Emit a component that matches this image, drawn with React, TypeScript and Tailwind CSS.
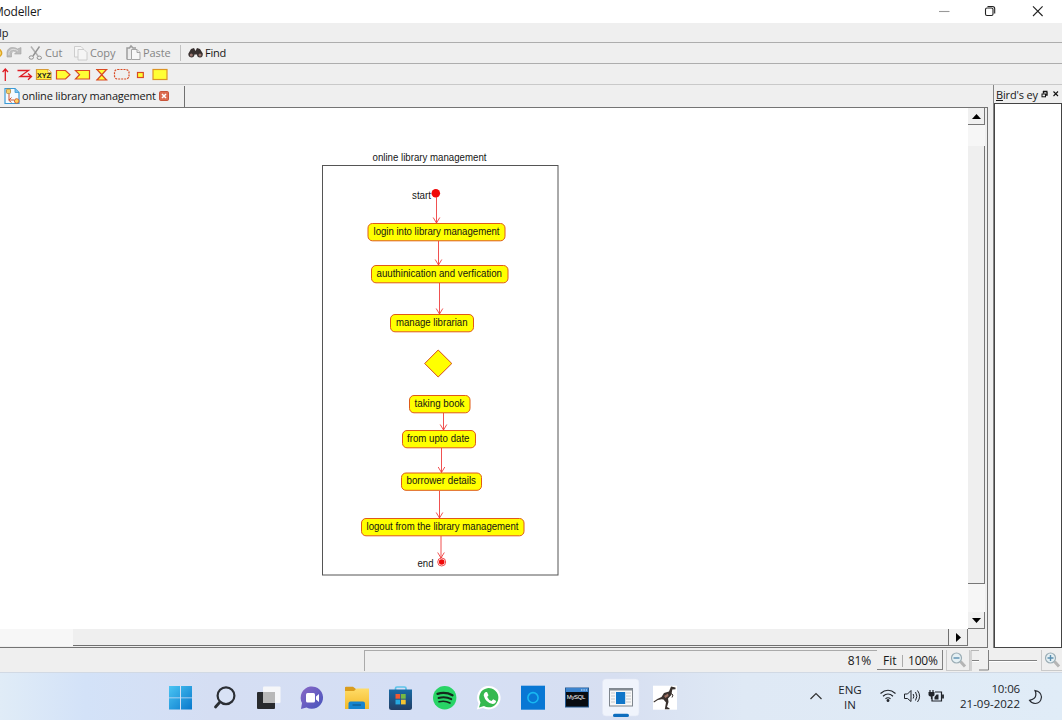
import React from "react";

type NodeBox = { label: string; x: number; y: number; w: number; tx: number; tw: number };

const nodes: NodeBox[] = [
  { label: "login into library management", x: 368, y: 223.5, w: 137, tx: 373.5, tw: 126 },
  { label: "auuthinication and verfication", x: 371.5, y: 265.5, w: 136.5, tx: 376.5, tw: 125.5 },
  { label: "manage librarian", x: 390.5, y: 314.5, w: 83, tx: 396, tw: 71.5 },
  { label: "taking book", x: 409.5, y: 395.5, w: 60.5, tx: 414.5, tw: 50 },
  { label: "from upto date", x: 402.5, y: 430.5, w: 73, tx: 407, tw: 62.5 },
  { label: "borrower details", x: 401.5, y: 473, w: 80, tx: 406.5, tw: 69.5 },
  { label: "logout from the library management", x: 361.5, y: 518.5, w: 162.5, tx: 366.5, tw: 152 },
];

const arrows = [
  [436.5, 197, 223],
  [438.5, 241, 265],
  [439.5, 283, 314],
  [443.5, 413, 430],
  [441.5, 448, 472.5],
  [439.5, 491, 518],
  [441, 536, 558],
];

function Diagram() {
  return (
    <svg className="block h-[521px] w-[968px] bg-white" viewBox="0 108 968 521" fontFamily="'Liberation Sans', Arial, sans-serif" fontSize="10.4" fill="#151515">
      <text x="372.5" y="161" textLength="114" lengthAdjust="spacingAndGlyphs">online library management</text>
      <rect x="322.5" y="165.5" width="235.5" height="409.5" fill="none" stroke="#555" />
      <text x="412" y="199" textLength="19" lengthAdjust="spacingAndGlyphs">start</text>
      <circle cx="435.8" cy="193.3" r="4.3" fill="#f00909" />
      {arrows.map(([x, a, b]) => (
        <g key={a} fill="none" stroke="#ee3d3d" strokeWidth="0.9">
          <path d={`M${x} ${a}V${b}`} />
          <path d={`M${x - 3.3} ${b - 5.5}L${x} ${b}L${x + 3.3} ${b - 5.5}`} />
        </g>
      ))}
      {nodes.map((n) => (
        <g key={n.label}>
          <rect x={n.x} y={n.y} width={n.w} height="17.3" rx="4.5" fill="#ffff00" stroke="#df5a18" />
          <text x={n.tx} y={Math.floor(n.y + 11.9)} textLength={n.tw} lengthAdjust="spacingAndGlyphs">{n.label}</text>
        </g>
      ))}
      <path d="M438.2 350L451.8 363.5L438.2 377L424.7 363.5Z" fill="#ffff00" stroke="#d34a1c" />
      <text x="417.5" y="567" textLength="16" lengthAdjust="spacingAndGlyphs">end</text>
      <circle cx="441.7" cy="562" r="4" fill="#fff" stroke="#f02020" strokeWidth="0.8" />
      <circle cx="441.7" cy="562" r="2.8" fill="#f00909" />
    </svg>
  );
}

function TitleBar() {
  return (
    <div className="flex h-[23px] shrink-0 items-center justify-between bg-white">
      <span className="ml-[-7px] text-[12px] tracking-[-0.2px]">Modeller</span>
      <svg className="h-[23px] w-[182px]" viewBox="880 0 182 23" fill="none" stroke="#222" strokeWidth="1.1">
        <path d="M939 11.5H949.5" stroke="#999" />
        <rect x="985.5" y="8" width="7.5" height="7.5" rx="1.5" />
        <path d="M987.5 6.5H992.5Q994.7 6.5 994.7 8.7V13.5" />
        <path d="M1033 6.3L1042.6 16M1042.6 6.3L1033 16" />
      </svg>
    </div>
  );
}

function EditBar() {
  return (
    <div className="flex h-[21px] shrink-0 items-center border-b border-[#adadad] text-[11px] text-[#858585]">
      <svg className="h-5 w-[45px] shrink-0" viewBox="0 43 45 20">
        <circle cx="-2" cy="53" r="3.6" fill="#ffe37a" stroke="#dda524" strokeWidth="1.6" />
        <path d="M7 57V52Q8 47.5 12.5 47.5Q16 47.5 17.5 49L21 47.5V54H14.5L16.5 52Q13 49.8 11.5 53V57Z" fill="#bcbcbc" stroke="#a3a3a3" strokeWidth="0.6" />
        <path d="M9 55Q8 50 13 49.3Q16 49 18 51" fill="none" stroke="#dedede" />
        <g fill="none" stroke="#929292">
          <path d="M31 46.5L38 56" stroke="#b0b0b0" strokeWidth="1.5" />
          <path d="M39.5 46.5L33 56" strokeWidth="1.4" />
          <ellipse cx="31.3" cy="57.5" rx="2.2" ry="1.7" />
          <ellipse cx="39.3" cy="57.8" rx="2.2" ry="1.7" />
        </g>
      </svg>
      <span className="w-[28px] tracking-[-0.1px]">Cut</span>
      <svg className="h-5 w-[17px] shrink-0" viewBox="73 43 17 20" fill="#f5f5f5" stroke="#c8c8c8" strokeWidth="0.9">
        <path d="M74.5 46.5H81L83.5 49V57H74.5Z" />
        <path d="M78 49.5H84L87 52.5V60H78Z" />
      </svg>
      <span className="w-[35px] tracking-[-0.1px]">Copy</span>
      <svg className="h-5 w-[18px] shrink-0" viewBox="125 43 18 20" fill="#ececec" stroke="#9d9d9d" strokeWidth="0.9">
        <path d="M127 59.5V48H129.5L131 46L133 48H136" strokeWidth="1.5" />
        <path d="M127 59.5H131" />
        <path d="M131.5 49.5H137L140 52.5V59.5H131.5Z" fill="#f8f8f8" />
        <path d="M137 49.5V52.5H140" />
      </svg>
      <span className="w-[36px] tracking-[-0.1px]">Paste</span>
      <span className="ml-px mr-[7px] h-[16px] w-px bg-[#c2c2c2]" />
      <svg className="h-5 w-[17px] shrink-0" viewBox="188 43 17 20">
        <path d="M191 49L194 48L195.5 51L197 48L200 49L202.8 53.5Q203 57.3 200 57.5Q197 57.3 197 54.5H194.5Q194.3 57.5 191.3 57.5Q188.3 57.2 188.3 53.8Z" fill="#38302f" />
        <circle cx="191.3" cy="55" r="1.5" fill="#9b7770" />
        <circle cx="200" cy="55" r="1.5" fill="#9b7770" />
      </svg>
      <span className="tracking-[-0.2px] text-[#151515]">Find</span>
    </div>
  );
}

function ShapeBar() {
  return (
    <div className="flex h-[21px] shrink-0 items-center border-b border-[#c9c9c9]">
      <svg className="h-5 w-[180px]" viewBox="0 64 180 20" fill="#ffff35" stroke="#d94a23" strokeWidth="1.2">
        <path d="M5.3 81V69M2.6 72L5.3 69L8 72" fill="none" stroke="#df1c24" strokeWidth="1.3" />
        <path d="M17.5 70.5H28.5L20 76.5H31M28 73.5L31.5 76.5L28 79.8" fill="none" stroke="#df1c24" strokeWidth="1.3" />
        <path d="M36.5 69.5H48L51 72.5V79.5H36.5Z" stroke="#d79b36" fill="#ffee3b" />
        <path d="M48 69.5V72.5H51" fill="#fff" stroke="#d79b36" strokeWidth="0.7" />
        <text x="37" y="77.5" fontFamily="'Liberation Sans', sans-serif" fontSize="6.8" fontWeight="bold" fill="#222" stroke="none" textLength="14" lengthAdjust="spacingAndGlyphs">XYZ</text>
        <path d="M56.5 70.5H65.5L70 74.7L65.5 79H56.5Z" />
        <path d="M75.5 70.5H89.5V79H75.5L79.5 74.7Z" />
        <path d="M96 69.5H107.5M96 80H107.5M97 69.5L106.5 80H97L106.5 69.5Z" />
        <rect x="114.5" y="69.5" width="14.5" height="9.5" rx="3" fill="none" strokeDasharray="2 1" />
        <rect x="137.5" y="72.5" width="5.8" height="5" />
        <rect x="153" y="69.5" width="14" height="10" stroke="#dd9424" />
      </svg>
    </div>
  );
}

function TabStrip() {
  return (
    <div className="flex h-[22px] shrink-0 items-center bg-[#efefef]">
      <div className="flex h-[21px] w-[185px] items-center border-r-[1.5px] border-[#707070] pl-[4px]">
        <svg className="h-[18px] w-[18px] shrink-0" viewBox="4 86 18 18">
          <path d="M5 87.5H15L19 91.5V102.5H5Z" fill="#f4fbff" stroke="#3c9bd6" strokeWidth="1.2" />
          <path d="M15 87.5V91.5H19" fill="#78c2ee" stroke="#3c9bd6" strokeWidth="0.8" />
          <rect x="6.5" y="88" width="4" height="4.5" rx="1" fill="#f4d06b" stroke="#a3782c" strokeWidth="0.7" />
          <path d="M9 93V99H14M11.5 96.5L8.8 99.3L11.5 101.5" fill="none" stroke="#cf5433" strokeWidth="1" />
          <circle cx="16.7" cy="100" r="2.3" fill="#ffd45a" stroke="#d05830" strokeWidth="0.9" />
        </svg>
        <span className="w-[137px] whitespace-nowrap text-[11px] tracking-[-0.2px]">online library management</span>
        <svg className="h-[10px] w-[10px] shrink-0" viewBox="0 0 10 10">
          <rect x="0.5" y="0.5" width="9" height="9" rx="1.2" fill="#dc6d50" stroke="#c85439" />
          <path d="M3 3L7 7M7 3L3 7" stroke="#fff" strokeWidth="1.5" />
        </svg>
      </div>
    </div>
  );
}

function VScroll() {
  return (
    <div className="flex h-[521px] w-[17px] flex-col bg-[#f6f6f6]">
      <div className="flex h-[17px] items-center justify-center border-b border-r border-[#777] bg-[#f0f0f0]">
        <svg className="h-[5px] w-[9px]" viewBox="0 0 9 5"><path d="M0 5L4.5 0L9 5Z" /></svg>
      </div>
      <div className="h-[21px]" />
      <div className="h-[438px] border-b border-r border-[#777] bg-[#efefef]" />
      <div className="flex-1" />
      <div className="flex h-[17px] items-center justify-center border-b border-r border-[#777] bg-[#f0f0f0]">
        <svg className="h-[5px] w-[9px]" viewBox="0 0 9 5"><path d="M0 0H9L4.5 5Z" /></svg>
      </div>
    </div>
  );
}

function EditorPane() {
  return (
    <div className="flex w-[988px] shrink-0 flex-col">
      <TabStrip />
      <div className="flex flex-1 flex-col border-b border-r border-t border-[#747474] bg-[#efefef]">
        <div className="flex">
          <Diagram />
          <VScroll />
        </div>
        <div className="flex h-[17px] w-[968px] bg-[#f7f7f7]">
          <div className="w-[73px]" />
          <div className="w-[876px] border-b border-r border-[#707070] bg-[#efefef]" />
          <div className="flex w-[19px] items-center justify-center border-b border-r border-[#777] bg-[#f0f0f0]">
            <svg className="h-[9px] w-[5px]" viewBox="0 0 5 9"><path d="M0 0V9L5 4.5Z" /></svg>
          </div>
        </div>
      </div>
    </div>
  );
}

function BirdPane() {
  return (
    <div className="ml-[5px] flex flex-1 flex-col border-l border-[#858585]">
      <div className="flex h-[18px] shrink-0 items-center pl-[2px]">
        <span className="w-[43px] whitespace-nowrap text-[11px] leading-[15px] tracking-[-0.15px]"><u className="underline-offset-1">B</u>ird's ey</span>
        <svg className="h-[10px] w-[22px]" viewBox="1039 89 22 10" fill="none" stroke="#111">
          <path d="M1043 91.5H1047.5M1043.5 91V93.5M1047 92V95H1045.5" strokeWidth="1.4" />
          <rect x="1042" y="94" width="3.5" height="2.8" />
          <path d="M1053.5 91.5L1058 96M1058 91.5L1053.5 96" strokeWidth="1.1" />
        </svg>
      </div>
      <div className="flex-1 border border-[#444] bg-white" />
    </div>
  );
}

function Magnifier({ plus }: { plus?: boolean }) {
  return (
    <svg className="h-[18px] w-[18px] shrink-0" viewBox="0 0 18 18" fill="none">
      <path d="M10.5 10.5L15 15.5" stroke="#b5b5b5" strokeWidth="3" />
      <circle cx="6.5" cy="7" r="5" fill="#e5f0f4" stroke="#9badb5" strokeWidth="1.2" />
      <path d={plus ? "M3.5 7H9.5M6.5 4V10" : "M3.5 7H9.5"} stroke="#5b8fb0" strokeWidth="1.4" />
    </svg>
  );
}

function StatusBar() {
  return (
    <div className="flex h-[24px] shrink-0 items-start bg-[#efefef] pt-[2px] text-[12px]">
      <div className="w-[364px]" />
      <div className="flex h-[21px] w-[513px] items-center justify-end border-l border-t border-[#aaa] pr-[6px] tracking-[-0.1px]">81%</div>
      <div className="flex h-[20px] w-[66px] items-center border-b border-r border-[#808080] pl-[6px] pt-[3px]">
        <span className="w-[19px] whitespace-nowrap">Fit</span>
        <span className="mr-[5px] h-3 w-px bg-[#aaa]" />
        <span className="whitespace-nowrap tracking-[-0.2px]">100%</span>
      </div>
      <div className="ml-[3px] flex h-[21px] w-[24px] items-center border-b border-l border-r border-[#cacaca] pl-[3px]"><Magnifier /></div>
      <svg className="h-[22px] w-[71px]" viewBox="970 650 71 22">
        <path d="M971 671V650.5H987" fill="none" stroke="#b5b5b5" />
        <path d="M972 660.5H1037" stroke="#808080" />
        <path d="M972 661.5H1037" stroke="#fff" />
        <rect x="979" y="650" width="9" height="20" fill="#f0f0f0" />
        <path d="M979 670H988.5V650" fill="none" stroke="#808080" />
      </svg>
      <div className="flex h-[21px] w-[21px] items-center border-b border-l border-[#cacaca] pl-[2px]"><Magnifier plus /></div>
    </div>
  );
}

function TaskIcons() {
  return (
    <svg className="h-[48px] w-[530px] shrink-0" viewBox="160 672 530 48">
      <defs>
        <linearGradient id="win" x1="0" y1="0" x2="1" y2="1"><stop stopColor="#4bc5f3" /><stop offset="1" stopColor="#0878cc" /></linearGradient>
        <linearGradient id="chat" x1="0" y1="0" x2="1" y2="1"><stop stopColor="#8a68c6" /><stop offset="1" stopColor="#4654bc" /></linearGradient>
        <linearGradient id="folder" x1="0" y1="0" x2="0" y2="1"><stop stopColor="#ffdc68" /><stop offset="1" stopColor="#f3b928" /></linearGradient>
        <linearGradient id="store" x1="0" y1="0" x2="0" y2="1"><stop stopColor="#176aa5" /><stop offset="1" stopColor="#233e65" /></linearGradient>
      </defs>
      <path d="M169 685H180V696.5H169ZM181 685H192V696.5H181ZM169 697.3H180V708.5H169ZM181 697.3H192V708.5H181Z" fill="url(#win)" />
      <circle cx="226" cy="694.7" r="8.4" fill="#d8e2f5" stroke="#2b2e34" strokeWidth="2.2" />
      <path d="M219.5 701.5L215.5 706" stroke="#2b2e34" strokeWidth="2.8" strokeLinecap="round" />
      <rect x="257" y="691" width="18" height="17" rx="1" fill="#282a2d" />
      <rect x="263" y="685.5" width="17.5" height="16.5" rx="1" fill="#fafafa" opacity="0.9" />
      <path d="M263 691H275V702H263Z" fill="#b8b8b8" />
      <path d="M301 708L302 702A11.2 11.2 0 1 1 306.5 706.5Z" fill="url(#chat)" />
      <rect x="306" y="692" width="9" height="9.5" rx="1.5" fill="#fff" />
      <path d="M316 695.5L319 693V701L316 698.5Z" fill="#fff" />
      <path d="M345 688V686.5Q345 685.7 346 685.7H353L356 688H368Q369 688 369 689V707Q369 708 368 708H346Q345 708 345 707Z" fill="#d99c1e" />
      <path d="M345 690H354L356.5 687.5H369V708H345Z" fill="url(#folder)" />
      <path d="M348.5 708V702.5Q348.5 700.5 350.5 700.5H363Q365 700.5 365 702.5V708Z" fill="#1684cf" />
      <path d="M352.5 704H361" stroke="#126298" strokeWidth="1.5" />
      <path d="M395.5 690V687.2Q395.5 686 397 686H404.5Q406 686 406 687.2V690" fill="none" stroke="#5cc3e9" strokeWidth="1.7" />
      <path d="M389 688.5H412V706.5Q412 709 409.5 709H391.5Q389 709 389 706.5Z" fill="url(#store)" />
      <rect x="395.5" y="693" width="4.7" height="4.7" fill="#ef5932" /><rect x="401" y="693" width="4.7" height="4.7" fill="#76b943" />
      <rect x="395.5" y="698.7" width="4.7" height="4.7" fill="#27a8e0" /><rect x="401" y="698.7" width="4.7" height="4.7" fill="#f7c431" />
      <circle cx="444.7" cy="696.7" r="11.7" fill="#28d466" />
      <g fill="none" stroke="#14291c" strokeLinecap="round">
        <path d="M437.5 692.8Q445.5 690.5 452.5 694.2" strokeWidth="2.3" />
        <path d="M438.5 697Q445.3 695 451.3 698.2" strokeWidth="1.9" />
        <path d="M439 700.8Q445 699.2 450 702" strokeWidth="1.6" />
      </g>
      <path d="M476.8 708.5L478.5 702.5A11.8 11.8 0 1 1 483 707Z" fill="#fff" />
      <path d="M479 706.5L480.5 701.5A9.6 9.6 0 1 1 484 705Z" fill="#36b950" />
      <path d="M485.2 691.2L487 691L488.5 694.3L487.2 696Q488.5 699 491.5 700L493.2 698.2L496.2 700Q495.5 703 492.7 703Q485.5 701.5 483.7 694.5Q483.6 692.4 485.2 691.2Z" fill="#fff" />
      <rect x="521" y="684.7" width="24" height="24" fill="#0877d4" />
      <circle cx="533" cy="696.7" r="5.1" fill="none" stroke="#18b8f1" strokeWidth="1.6" />
      <rect x="565.5" y="687" width="23" height="19" fill="#080b10" stroke="#255a91" strokeWidth="1" />
      <rect x="566" y="687" width="22" height="4" fill="#3c83cd" />
      <path d="M581 689H587" stroke="#d9edff" strokeWidth="1.2" strokeDasharray="1.4 1" />
      <text x="566.8" y="697.5" fontFamily="'Liberation Sans', sans-serif" fontSize="6" fill="#fff" textLength="18.5">MySQL</text>
      <rect x="602.5" y="678" width="36.5" height="37" rx="3.5" fill="#f0f4fc" stroke="#e3e8f5" strokeWidth="0.6" />
      <rect x="609.5" y="687.5" width="23" height="17.5" fill="#f7f7f7" stroke="#7e858d" />
      <path d="M609.5 688.5H632.5" stroke="#858c94" strokeWidth="2" />
      <path d="M611 692H615M611 695H615M611 698H615M611 701H615M626 692H631M626 695H631M626 698H631M626 701H631" stroke="#c5c9ce" />
      <rect x="616" y="691" width="9.2" height="12" fill="#1076c9" />
      <rect x="613" y="712.8" width="16" height="3.2" rx="1.6" fill="#0d6dbe" />
      <rect x="653" y="684.7" width="24" height="24" fill="#fff" />
      <path d="M653.5 700.5Q658 697 661.5 696L664 692L669 690.5L671 685.5L675.5 686.5V688.3L672.3 688.5L671.3 694L668 697.5L668.5 701L667 706L669.5 707.3V708.2H664.8L666 701.5L663.5 698.5Q659 697.5 654 701.5Z" fill="#39312e" />
      <path d="M664 695L668 692.5L668.5 695L665.5 697Z" fill="#9c7063" />
      <path d="M670.5 692L673 694L672 696.5" fill="none" stroke="#39312e" />
    </svg>
  );
}

function TaskBar() {
  return (
    <div className="flex h-[48px] shrink-0 items-center border-t border-[#d1d9e4] bg-[linear-gradient(90deg,#e0ecf7_0%,#d3e2f8_8%,#d5def3_20%,#d5dff5_40%,#d7dff1_58%,#dfe9f5_70%,#e0ecf7_100%)] text-[11.5px] text-[#20242a]">
      <div className="w-[160px]" />
      <TaskIcons />
      <svg className="h-[47px] w-[142px]" viewBox="690 672 142 47"><path d="M810.5 698L816 692.5L821.5 698" fill="none" stroke="#333" strokeWidth="1.2" /></svg>
      <div className="w-[36px] text-center leading-[15px]"><div>ENG</div><div>IN</div></div>
      <svg className="h-[47px] w-[77px]" viewBox="868 672.5 77 47" fill="none" stroke="#20242a" strokeWidth="1.2">
        <path d="M880.5 693Q888 686.5 895.5 693" /><path d="M883 695.7Q888 691.3 893 695.7" /><path d="M885.5 698.3Q888 696.2 890.5 698.3" />
        <circle cx="888" cy="700" r="0.9" fill="#20242a" />
        <path d="M904.5 693.5H907.5L911 690V701L907.5 698H904.5Z" strokeWidth="1" />
        <path d="M913.2 693.5Q914.5 695.7 913.2 698M915.5 691.5Q918.3 695.7 915.5 700M917.5 690Q921.7 695.7 917.5 701.5" strokeWidth="1" />
        <path d="M935 691.5H941.5V700.5H932V696" />
        <path d="M943 694V698" strokeWidth="1.8" />
        <path d="M934.5 699V696.5L936.5 694H938.5V699Z" fill="#20242a" stroke="none" />
        <path d="M928.5 691.5H934.5V694Q934.5 696 931.5 696Q928.5 696 928.5 694Z" fill="#20242a" stroke="none" /><path d="M930 689.5V692M933 689.5V692M931.5 695V698.5" />
      </svg>
      <div className="w-[75px] pb-[2px] text-right leading-[15px]"><div className="tracking-[-0.15px]">10:06</div><div className="whitespace-nowrap">21-09-2022</div></div>
      <svg className="ml-[8px] h-[16px] w-[16px] shrink-0" viewBox="0 0 16 16" fill="none" stroke="#252930" strokeWidth="1.2"><path d="M7 1.5Q13 2.5 13.5 8Q12.8 14.3 7.2 14.5Q3.3 14.3 1.5 11.3Q7.5 10 7.8 6.2Q8.2 4 7 1.5Z" /></svg>
    </div>
  );
}

export default function App() {
  return (
    <div className="flex h-[720px] w-[1062px] flex-col overflow-hidden bg-[#efefef] font-['Open_Sans','Noto_Sans',sans-serif] text-[#181818]">
      <TitleBar />
      <div className="flex h-[20px] shrink-0 items-center border-b border-[#adadad]"><span className="ml-[-1px] pt-px text-[11px]">lp</span></div>
      <EditBar />
      <ShapeBar />
      <div className="flex h-[563px] shrink-0">
        <EditorPane />
        <BirdPane />
      </div>
      <StatusBar />
      <TaskBar />
    </div>
  );
}
